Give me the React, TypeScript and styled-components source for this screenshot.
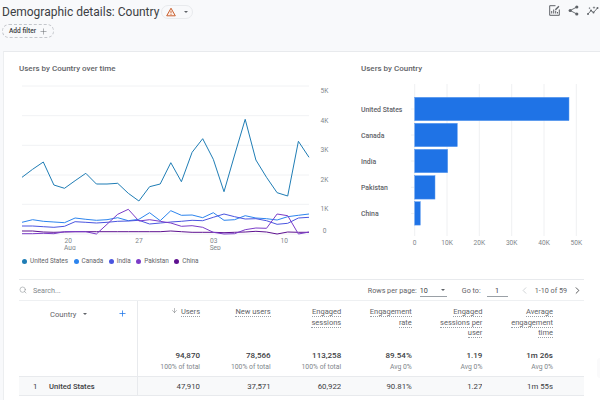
import React from "react";
import styled, { createGlobalStyle } from "styled-components";
import { ArrowDown, ChevronLeft, ChevronRight, Plus, Search } from "lucide-react";

const Global = createGlobalStyle`
  html, body { margin: 0; padding: 0; background: #f8f9fb; }
  body { width: 600px; height: 400px; overflow: hidden; font-family: Roboto, "Liberation Sans", sans-serif; color: #3c4043; }
`;

const Page = styled.div`
  position: relative;
  width: 600px;
  height: 400px;
  overflow: hidden;
  display: flex;
  flex-direction: column;
`;
const Header = styled.header`
  height: 51px;
  flex: none;
  display: flex;
  justify-content: space-between;
  padding: 3px 1px 0 2px;
  box-sizing: border-box;
`;
const HeaderLeft = styled.div`
  display: flex;
  flex-direction: column;
  gap: 3px;
`;
const TitleRow = styled.div`
  display: flex;
  align-items: center;
  gap: 2px;
  height: 18px;
`;
const Title = styled.h1`
  margin: 0;
  font-size: 12px;
  line-height: 18px;
  font-weight: 400;
  color: #3c4043;
  white-space: nowrap;
`;
const StatusPill = styled.div`
  width: 32px;
  height: 14px;
  border: 1px solid #e8eaed;
  border-radius: 8px;
  display: flex;
  align-items: center;
  gap: 8px;
  padding-left: 4px;
  box-sizing: border-box;
`;
const Caret = styled.span<{ $w?: number }>`
  width: 0;
  height: 0;
  border-left: ${(p) => p.$w || 2}px solid transparent;
  border-right: ${(p) => p.$w || 2}px solid transparent;
  border-top: ${(p) => p.$w || 2}px solid #5f6368;
`;
const AddFilter = styled.button`
  width: 52px;
  height: 14px;
  padding: 0 0 0 6px;
  border: 1px dashed #c4c7cc;
  border-radius: 7px;
  background: transparent;
  display: flex;
  align-items: center;
  gap: 3px;
  font: 500 6.6px Roboto, sans-serif;
  color: #3c4043;
  white-space: nowrap;
  box-sizing: border-box;
`;
const Actions = styled.div`
  display: flex;
  align-items: flex-start;
  gap: 8px;
  padding-top: 2px;
`;
const Card = styled.main`
  flex: 1;
  margin-left: 3px;
  background: #fff;
  border-top: 1px solid #e8eaed;
  border-left: 1px solid #eceef0;
  display: flex;
  flex-direction: column;
  padding-left: 15px;
  min-height: 0;
`;
const Charts = styled.section`
  height: 228px;
  flex: none;
  display: flex;
  width: 565px;
  box-sizing: border-box;
  border-bottom: 1px solid #e8eaed;
`;
const LineColumn = styled.div`
  width: 342px;
  flex: none;
`;
const BarColumn = styled.div`
  flex: 1;
`;
const ChartTitle = styled.h2`
  margin: 11px 0 5px;
  height: 12px;
  line-height: 12px;
  font-size: 8px;
  font-weight: 500;
  color: #5f6368;
`;
const Plot = styled.svg`
  display: block;
  height: 170px;
`;
const Legend = styled.ul`
  list-style: none;
  margin: 6px 0 0 3px;
  padding: 0;
  height: 10px;
  display: flex;
  gap: 5.5px;
`;
const LegendItem = styled.li`
  display: flex;
  align-items: center;
  gap: 3px;
  font-size: 6.4px;
  color: #5f6368;
  white-space: nowrap;
`;
const Dot = styled.span<{ $c: string }>`
  width: 5px;
  height: 5px;
  border-radius: 50%;
  background: ${(p) => p.$c};
`;
const Toolbar = styled.div`
  height: 20px;
  width: 565px;
  flex: none;
  display: flex;
  align-items: center;
  font-size: 7.2px;
  color: #5f6368;
  box-sizing: border-box;
`;
const SearchLabel = styled.span`
  margin-left: 6px;
  flex: 1;
  color: #80868b;
`;
const Field = styled.span<{ $w: number; $center?: boolean }>`
  width: ${(p) => p.$w}px;
  height: 12px;
  margin-top: 1px;
  border-bottom: 1px solid #9aa0a6;
  margin-left: ${(p) => (p.$center ? 6 : 3)}px;
  display: flex;
  align-items: center;
  justify-content: ${(p) => (p.$center ? "center" : "space-between")};
  padding: ${(p) => (p.$center ? "0" : "0 2px 0 0")};
  box-sizing: border-box;
  color: #3c4043;
`;
const GoTo = styled.span`
  margin-left: 15px;
`;
const Pager = styled.span`
  display: flex;
  align-items: center;
  gap: 5px;
  margin: 0 1px 0 11px;
`;
const Table = styled.div`
  width: 565px;
  display: grid;
  grid-template-columns: 119px 62px repeat(5, 70.6px) 1fr;
  border-top: 1px solid #eef0f2;
`;
const DimHead = styled.div`
  height: 75px;
  border-right: 1px solid #e8eaed;
  display: flex;
  align-items: flex-start;
  padding: 8px 10px 0 31px;
  box-sizing: border-box;
  font-size: 7.6px;
  color: #5f6368;
`;
const DimHeadLabel = styled.span`
  display: flex;
  align-items: center;
  gap: 7px;
  flex: 1;
  height: 10px;
`;
const MetricHead = styled.div`
  height: 75px;
  display: flex;
  flex-direction: column;
  align-items: flex-end;
  box-sizing: border-box;
  padding-top: 6px;
`;
const Spacer = styled.div`
  height: 75px;
`;
const HeadText = styled.div`
  height: 43px;
  font-size: 7.5px;
  line-height: 10.7px;
  color: #5f6368;
  text-align: right;
`;
const Dashed = styled.span`
  display: inline-flex;
  align-items: center;
  gap: 3px;
  border-bottom: 1px dotted #9aa0a6;
  white-space: nowrap;
  line-height: 9px;
`;
const HeadLine = styled.div`
  height: 10.7px;
`;
const SortMark = styled.span`
  display: inline-flex;
  margin-right: 3px;
`;
const Total = styled.div`
  font-size: 8px;
  height: 11px;
  line-height: 11px;
  font-weight: 500;
  color: #3c4043;
`;
const TotalSub = styled.div`
  margin-top: 2px;
  font-size: 6.8px;
  line-height: 9px;
  color: #80868b;
`;
const RowCell = styled.div<{ $dim?: boolean }>`
  height: 20px;
  background: #f8f9fa;
  border-top: 1px solid #e8eaed;
  border-bottom: 1px solid #e8eaed;
  font-size: 7.8px;
  color: #3c4043;
  display: flex;
  align-items: center;
  justify-content: ${(p) => (p.$dim ? "flex-start" : "flex-end")};
  box-sizing: border-box;
  border-right: ${(p) => (p.$dim ? "1px solid #e8eaed" : "0")};
`;
const Rank = styled.span`
  width: 30px;
  padding-left: 14px;
  box-sizing: border-box;
`;
const CountryName = styled.span`
  font-weight: 500;
  font-size: 7.6px;
`;
const SideHandle = styled.div`
  position: absolute;
  right: 0;
  top: 358px;
  width: 3px;
  height: 20px;
  border-radius: 4px 0 0 4px;
  background: #fafafb;
`;

const px = (i: number) => 22 + (i * 287) / 27;
const pts = (a: number[]) =>
  a.map((y, i) => `${px(i).toFixed(1)},${(y / 3 + 80).toFixed(1)}`).join(" ");

const us = [292, 268, 246, 315, 325, 302, 280, 312, 312, 310, 340, 363, 320, 312, 248, 305, 217, 176, 238, 335, 225, 118, 240, 292, 338, 348, 184, 232];
const ca = [427, 419, 424, 426, 428, 414, 418, 421, 419, 413, 422, 418, 398, 422, 392, 406, 405, 413, 398, 421, 419, 407, 414, 416, 420, 410, 406, 402];
const ind = [438, 438, 440, 442, 439, 425, 427, 429, 427, 424, 423, 421, 432, 429, 426, 424, 421, 422, 412, 402, 410, 417, 416, 422, 433, 430, 414, 412];
const pk = [461, 461, 460, 461, 455, 455, 455, 462, 433, 403, 388, 423, 419, 424, 429, 439, 437, 442, 457, 462, 461, 449, 444, 445, 402, 407, 462, 456];
const cn = [453, 453, 456, 457, 456, 455, 455, 455, 455, 455, 455, 455, 455, 455, 453, 455, 457, 457, 457, 458, 457, 456, 454, 456, 462, 456, 457, 457];

const series = [
  { name: "United States", color: "#1f7db5", data: us },
  { name: "Canada", color: "#2c84ee", data: ca },
  { name: "India", color: "#4a55e0", data: ind },
  { name: "China", color: "#5e1190", data: cn },
  { name: "Pakistan", color: "#7b3cc8", data: pk },
];
const legend = ["United States", "Canada", "India", "Pakistan", "China"].map(
  (n) => series.find((s) => s.name === n)!
);

const AXIS = "#80868b";
const GRID = "#f1f2f4";

const yTicks: [string, number, number][] = [
  ["5K", 86, 90.3],
  ["4K", 115.7, 120],
  ["3K", 145.3, 149],
  ["2K", 175, 179.3],
  ["1K", 204.3, 208.3],
  ["0", 234, 230],
];
const xTicks: [string, number, number, string?][] = [
  ["20", 68.3, 240, "Aug"],
  ["27", 139, 240],
  ["03", 213.7, 240, "Sep"],
  ["10", 284.3, 240],
];

const LineChart = () => (
  <Plot viewBox="19 80 342 170" width={342}>
    <g fontSize={6.6} fill={AXIS} fontFamily="Roboto">
      {yTicks.map(([l, y, ty]) => (
        <g key={l}>
          <line x1={22} x2={309} y1={y} y2={y} stroke={GRID} strokeWidth={1} />
          <text x={324.5} y={ty + 2.5} textAnchor="middle">
            {l}
          </text>
        </g>
      ))}
      {xTicks.map(([l, x, y, sub]) => (
        <g key={l} textAnchor="middle">
          <text x={x} y={y + 2.5}>{l}</text>
          {sub && <text x={x + 1.5} y={y + 9.5}>{sub}</text>}
        </g>
      ))}
    </g>
    {series.map((s) => (
      <polyline key={s.name} points={pts(s.data)} fill="none" stroke={s.color} strokeWidth={1} strokeLinejoin="round" />
    ))}
  </Plot>
);

const bars = [
  { name: "United States", end: 569, top: 97.3, mid: 109 },
  { name: "Canada", end: 457.3, top: 123.3, mid: 135 },
  { name: "India", end: 447.7, top: 149.3, mid: 161 },
  { name: "Pakistan", end: 435, top: 175.7, mid: 187.3 },
  { name: "China", end: 420.3, top: 201.7, mid: 213.5 },
];
const barGrid: [string, number][] = [
  ["0", 414.7],
  ["10K", 447],
  ["20K", 479.3],
  ["30K", 511.7],
  ["40K", 544],
  ["50K", 576.3],
];

const BarChart = () => (
  <Plot viewBox="361 80 224 170" width={224}>
    {barGrid.map(([l, x]) => (
      <g key={l}>
        <line x1={x} x2={x} y1={84} y2={236} stroke="#eff0f2" strokeWidth={1} />
        <text x={x} y={244.8} textAnchor="middle" fontSize={6.6} fill={AXIS} fontFamily="Roboto">
          {l}
        </text>
      </g>
    ))}
    {bars.map((b) => (
      <g key={b.name}>
        <line x1={411} x2={414.7} y1={b.mid} y2={b.mid} stroke="#eff0f2" strokeWidth={1} />
        <rect x={414.7} y={b.top} width={b.end - 414.7} height={23.4} fill="#1f73e6" stroke="#5e9cef" strokeWidth={0.5} />
        <text x={361} y={b.mid + 2.5} fontSize={6.9} fontWeight={500} fill="#5f6368" fontFamily="Roboto">
          {b.name}
        </text>
      </g>
    ))}
  </Plot>
);

const WarningIcon = () => (
  <svg width="10" height="10" viewBox="0 0 10 10">
    <path d="M5 1.2 L9.3 8.8 H0.7 Z" fill="#fbeee8" stroke="#c9602f" strokeWidth="1" strokeLinejoin="round" />
    <path d="M5 3.8 V6.3 M5 7 V7.9" stroke="#c9602f" strokeWidth="0.9" />
  </svg>
);
const EditChartIcon = () => (
  <svg width="11" height="11" viewBox="0 0 11 11" fill="none">
    <path d="M6.5 0.7 H0.7 V10.3 H10.3 V4.5" stroke="#5f6368" strokeWidth="1" />
    <path d="M2.7 8.5 V6 M4.7 8.5 V4.5 M6.7 8.5 V5.7 M8.5 8.5 V7" stroke="#5f6368" strokeWidth="1" />
    <path d="M6.2 4 L9.4 0.8 L10.4 1.8 L7.2 5 H6.2 Z" fill="#5f6368" />
  </svg>
);
const ShareIcon = () => (
  <svg width="11" height="11" viewBox="0 0 11 11" fill="none">
    <path d="M8.8 2 L2.2 5.5 L8.8 9" stroke="#5f6368" strokeWidth="0.9" />
    <circle cx="8.8" cy="2" r="1.6" fill="#5f6368" />
    <circle cx="2.2" cy="5.5" r="1.6" fill="#5f6368" />
    <circle cx="8.8" cy="9" r="1.6" fill="#5f6368" />
  </svg>
);
const InsightsIcon = () => (
  <svg width="12" height="11" viewBox="0 0 12 11" fill="none">
    <path d="M1 9 L4 5.5 L6.5 7.5 L10.5 3" stroke="#5f6368" strokeWidth="0.9" />
    <circle cx="1" cy="9" r="1" fill="#5f6368" />
    <circle cx="4" cy="5.5" r="1" fill="#5f6368" />
    <circle cx="6.5" cy="7.5" r="1" fill="#5f6368" />
    <circle cx="10.5" cy="3" r="1" fill="#5f6368" />
    <path d="M7 1 L7.4 2.2 L8.6 2.6 L7.4 3 L7 4.2 L6.6 3 L5.4 2.6 L6.6 2.2 Z" fill="#5f6368" />
    <path d="M2.5 2 L2.8 2.8 L3.6 3.1 L2.8 3.4 L2.5 4.2 L2.2 3.4 L1.4 3.1 L2.2 2.8 Z" fill="#5f6368" />
  </svg>
);

const metrics = [
  { head: ["Users"], sorted: true, total: "94,870", sub: "100% of total" },
  { head: ["New users"], total: "78,566", sub: "100% of total" },
  { head: ["Engaged", "sessions"], total: "113,258", sub: "100% of total" },
  { head: ["Engagement", "rate"], total: "89.54%", sub: "Avg 0%" },
  { head: ["Engaged", "sessions per", "user"], total: "1.19", sub: "Avg 0%" },
  { head: ["Average", "engagement", "time"], total: "1m 26s", sub: "Avg 0%" },
];
const row = ["47,910", "37,571", "60,922", "90.81%", "1.27", "1m 55s"];

export default function App() {
  return (
    <Page>
      <Global />
      <Header>
        <HeaderLeft>
          <TitleRow>
            <Title>Demographic details: Country</Title>
            <StatusPill>
              <WarningIcon />
              <Caret />
            </StatusPill>
          </TitleRow>
          <AddFilter>
            Add filter
            <Plus size={9} strokeWidth={1.3} color="#5f6368" />
          </AddFilter>
        </HeaderLeft>
        <Actions>
          <EditChartIcon />
          <ShareIcon />
          <InsightsIcon />
        </Actions>
      </Header>
      <Card>
        <Charts>
          <LineColumn>
            <ChartTitle>Users by Country over time</ChartTitle>
            <LineChart />
            <Legend>
              {legend.map((s) => (
                <LegendItem key={s.name}>
                  <Dot $c={s.color} />
                  {s.name}
                </LegendItem>
              ))}
            </Legend>
          </LineColumn>
          <BarColumn>
            <ChartTitle>Users by Country</ChartTitle>
            <BarChart />
          </BarColumn>
        </Charts>
        <Toolbar>
          <Search size={8} strokeWidth={1.5} color="#80868b" />
          <SearchLabel>Search...</SearchLabel>
          <span>Rows per page:</span>
          <Field $w={27}>
            10
            <Caret $w={2.5} />
          </Field>
          <GoTo>Go to:</GoTo>
          <Field $w={21} $center>
            1
          </Field>
          <Pager>
            <ChevronLeft size={11} strokeWidth={1} color="#9aa0a6" />
            <span>1-10 of 59</span>
            <ChevronRight size={11} strokeWidth={1.6} color="#202124" />
          </Pager>
        </Toolbar>
        <Table>
          <DimHead>
            <DimHeadLabel>
              Country
              <Caret />
            </DimHeadLabel>
            <Plus size={9} strokeWidth={2} color="#1a73e8" />
          </DimHead>
          {metrics.map((m) => (
            <MetricHead key={m.head.join(" ")}>
              <HeadText>
                {m.head.map((l) => (
                  <HeadLine key={l}>
                    {m.sorted && (
                      <SortMark>
                        <ArrowDown size={7} strokeWidth={1.5} color="#5f6368" />
                      </SortMark>
                    )}
                    <Dashed>{l}</Dashed>
                  </HeadLine>
                ))}
              </HeadText>
              <Total>{m.total}</Total>
              <TotalSub>{m.sub}</TotalSub>
            </MetricHead>
          ))}
          <Spacer />
          <RowCell $dim>
            <Rank>1</Rank>
            <CountryName>United States</CountryName>
          </RowCell>
          {row.map((v) => (
            <RowCell key={v}>{v}</RowCell>
          ))}
          <RowCell />
        </Table>
      </Card>
      <SideHandle />
    </Page>
  );
}
